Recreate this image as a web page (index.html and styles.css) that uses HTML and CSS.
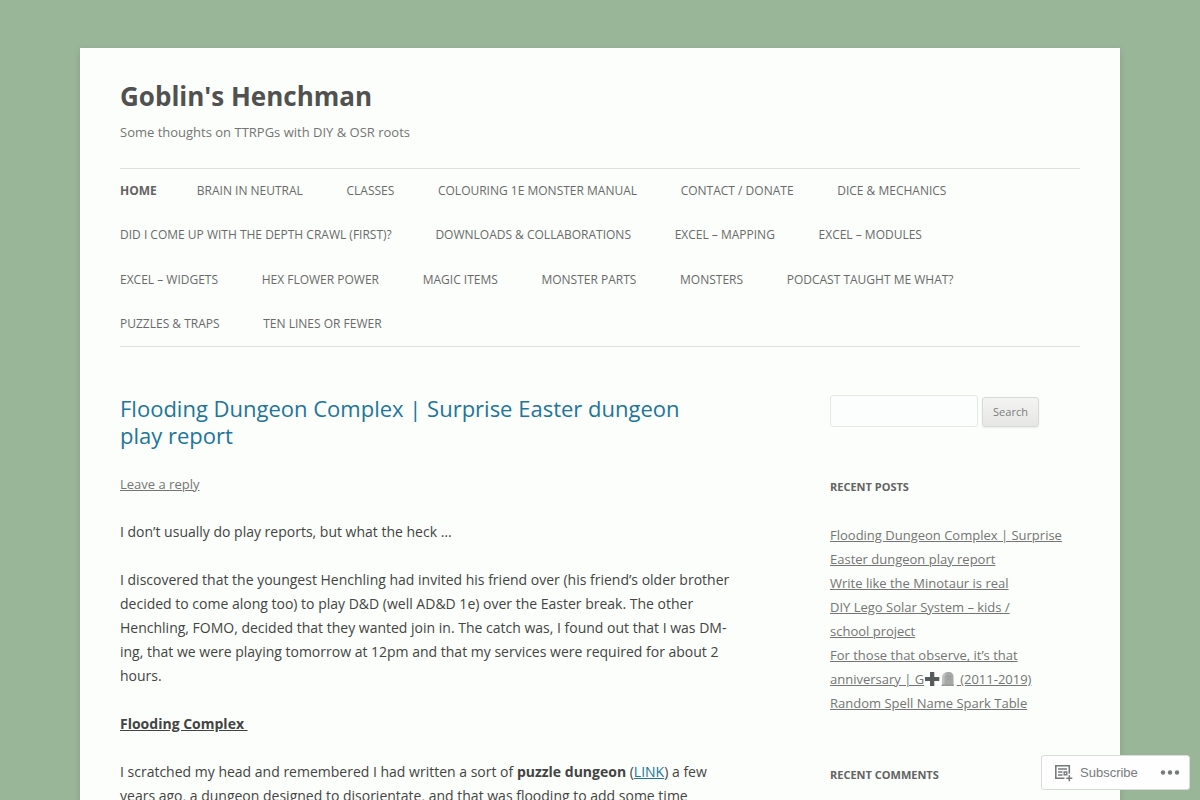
FILE: index.html
```html
<!DOCTYPE html>
<html lang="en">

<head>
    <meta charset="UTF-8">
    <meta name="viewport" content="width=device-width, initial-scale=1.0">
    <title>Goblin's Henchman</title>
    <link rel="stylesheet" href="styles.css">
</head>

<body>
    <div class="site">
        <header class="site-header">
            <h1 class="site-title">Goblin's Henchman</h1>
            <h2 class="site-description">Some thoughts on TTRPGs with DIY &amp; OSR roots</h2>
            <nav class="main-navigation">
                <ul>
                    <li class="current"><a href="#">Home</a></li><li><a href="#">Brain in Neutral</a></li>
                    <li><a href="#">Classes</a></li>
                    <li><a href="#">Colouring 1e Monster Manual</a></li>
                    <li><a href="#">Contact / Donate</a></li>
                    <li><a href="#">Dice &amp; Mechanics</a></li>
                    <li><a href="#">Did I come up with the Depth Crawl (first)?</a></li>
                    <li><a href="#">Downloads &amp; Collaborations</a></li>
                    <li><a href="#">Excel – Mapping</a></li>
                    <li><a href="#">Excel – Modules</a></li>
                    <li><a href="#">Excel – Widgets</a></li>
                    <li><a href="#">Hex Flower Power</a></li>
                    <li><a href="#">Magic Items</a></li>
                    <li><a href="#">Monster Parts</a></li>
                    <li><a href="#">Monsters</a></li>
                    <li><a href="#">Podcast taught me what?</a></li>
                    <li><a href="#">Puzzles &amp; Traps</a></li>
                    <li><a href="#">Ten Lines or Fewer</a></li>
                </ul>
            </nav>
        </header>

        <div class="main">
            <article class="site-content">
                <header class="entry-header">
                    <h1 class="entry-title"><a href="#">Flooding Dungeon Complex | Surprise Easter dungeon play&nbsp;report</a></h1>
                    <div class="comments-link"><a href="#">Leave a reply</a></div>
                </header>
                <div class="entry-content">
                    <p>I don’t usually do play reports, but what the heck …</p>
                    <p>I discovered that the youngest Henchling had invited his friend over (his friend’s older brother decided to come along too) to play D&amp;D (well AD&amp;D 1e) over the Easter break. The other Henchling, FOMO, decided that they wanted join in. The catch was, I found out that I was DM-ing, that we were playing tomorrow at 12pm and that my services were required for about 2 hours.</p>
                    <p><strong><u>Flooding Complex&nbsp;</u></strong></p>
                    <p>I scratched my head and remembered I had written a sort of <strong>puzzle dungeon</strong> (<a href="#">LINK</a>) a few years ago, a dungeon designed to disorientate, and that was flooding to add some time</p>
                </div>
            </article>

            <aside class="widget-area">
                <form class="widget search-form">
                    <input type="text" class="search-field" aria-label="Search for">
                    <button type="button" class="search-submit">Search</button>
                </form>
                <section class="widget">
                    <h3 class="widget-title">Recent Posts</h3>
                    <ul>
                        <li><a href="#">Flooding Dungeon Complex | Surprise Easter dungeon play&nbsp;report</a></li>
                        <li><a href="#">Write like the Minotaur is&nbsp;real</a></li>
                        <li><a href="#">DIY Lego Solar System – kids / school&nbsp;project</a></li>
                        <li><a href="#">For those that observe, it’s that anniversary | G<svg class="emoji" viewBox="0 0 16 16"><path d="M6 1h4.300v5h5v4h-5v5H6v-5H1V6h5z" fill="#565b5c"/></svg><svg class="emoji" viewBox="0 0 16 16"><path d="M2 15V8c0-4 2-7 6-7h1c3 0 4.500 2 4.500 5v9z" fill="#a6a8a7"/><path d="M2 15V8c0-4 2-7 6-7C5.500 2 4.500 5 4.500 8v7z" fill="#bfc1c0"/><path d="M6.500 5.500h5M6.500 8h5" stroke="#949796"/><path d="M1.500 13.500h12.500V15H1.500z" fill="#969998"/></svg> (2011-2019)</a></li>
                        <li><a href="#">Random Spell Name Spark&nbsp;Table</a></li>
                    </ul>
                </section>
                <section class="widget">
                    <h3 class="widget-title">Recent Comments</h3>
                </section>
            </aside>
        </div>
    </div>

    <div class="actionbar">
        <a href="#" class="subscribe">
            <svg width="19" height="18" viewBox="0 0 19 18" fill="none" stroke="#777a7b">
                <path d="M10.500 14.300H1.800V1.800h13.500v7.700" stroke-width="1.600"/>
                <path d="M4 5h9M4 8h4.500M4 11h4.500" stroke-width="1.400"/>
                <path d="M10.200 8h2.600v2.800h-2.600z" stroke-width="1.400"/>
                <path d="M15.300 11.300v6M12.300 14.300h6" stroke-width="1.500"/>
            </svg>
            <span>Subscribe</span>
        </a>
        <svg class="more" width="20" height="6" viewBox="0 0 20 6" fill="#777a7b">
            <circle cx="3" cy="2.500" r="2.200"/>
            <circle cx="10" cy="2.500" r="2.200"/>
            <circle cx="17" cy="2.500" r="2.200"/>
        </svg>
    </div>
</body>

</html>
```
FILE: styles.css
```css
* {
    box-sizing: border-box;
    margin: 0;
    padding: 0;
}

html {
    overflow: hidden;
}

body {
    height: 800px;
    overflow: hidden;
    background-color: #9ab699;
    color: #444;
    font-family: "Open Sans", Helvetica, Arial, sans-serif;
    font-size: 14px;
    line-height: 24px;
}

ul {
    list-style: none;
}

.site {
    width: 1040px;
    margin: 48px auto;
    padding: 0 40px;
    background-color: #fbfefa;
    box-shadow: 0 2px 6px rgba(100, 100, 100, 0.3);
}

.site-header {
    padding: 24px 0;
}

.site-title {
    color: #515151;
    font-size: 26px;
    line-height: 48px;
}

.site-description {
    color: #757575;
    font-size: 13px;
    font-weight: normal;
    line-height: 24px;
}

/* navigation */
.main-navigation {
    margin-top: 24px;
}

.main-navigation ul {
    border-top: 1px solid #dfe1de;
    border-bottom: 1px solid #dfe1de;
}

.main-navigation li {
    display: inline-block;
    margin-right: 40px;
    font-size: 12px;
    line-height: 44.300px;
}

.main-navigation a {
    display: block;
    color: #6a6a6a;
    text-decoration: none;
    text-transform: uppercase;
    white-space: nowrap;
}

.main-navigation .current a {
    color: #636363;
    font-weight: bold;
}

/* content */
.main {
    display: flex;
    justify-content: space-between;
    padding-top: 24px;
}

.site-content {
    width: 625px;
}

.entry-header {
    margin-bottom: 24px;
}

.entry-title {
    font-size: 22px;
    font-weight: normal;
    line-height: 26.400px;
}

.entry-title a {
    color: #21759b;
    text-decoration: none;
}

.comments-link {
    margin-top: 24px;
    font-size: 13px;
}

.comments-link a {
    color: #757575;
}

.entry-content p {
    margin-bottom: 24px;
}

.entry-content a {
    color: #21759b;
}

/* sidebar */
.widget-area {
    width: 250px;
}

.widget {
    margin-bottom: 48px;
    font-size: 13px;
}

.widget a {
    color: #757575;
}

.search-form {
    display: flex;
    align-items: flex-end;
    gap: 4px;
}

.search-field {
    width: 148px;
    height: 32px;
    border: 1px solid #e6e8e6;
    border-radius: 3px;
    background-color: #fcfefd;
}

.search-submit {
    width: 57px;
    height: 30px;
    border: 1px solid #d8dad8;
    border-radius: 3px;
    background: linear-gradient(#f4f5f3, #e6e7e5);
    box-shadow: 0 1px 2px rgba(64, 64, 64, 0.1);
    color: #7c7c7c;
    font-family: inherit;
    font-size: 11px;
    line-height: 16px;
    padding-bottom: 1px;
}

.widget-title {
    margin-bottom: 24px;
    color: #636363;
    font-size: 11px;
    line-height: 24px;
    text-transform: uppercase;
}

.emoji {
    width: 16px;
    height: 16px;
    margin-right: 0.3px;
    vertical-align: -3px;
}

/* floating subscribe bar */
.actionbar {
    position: fixed;
    right: 10px;
    bottom: 10px;
    display: flex;
    align-items: center;
    justify-content: space-between;
    width: 149px;
    height: 35px;
    padding: 0 9px 0 12px;
    border: 1px solid #d9dcd9;
    border-radius: 3px;
    background-color: #fdfefd;
    font-family: "Liberation Sans", Arial, sans-serif;
    font-size: 13px;
}

.subscribe {
    display: flex;
    align-items: center;
    gap: 7px;
    color: #787c7e;
    text-decoration: none;
}
```
